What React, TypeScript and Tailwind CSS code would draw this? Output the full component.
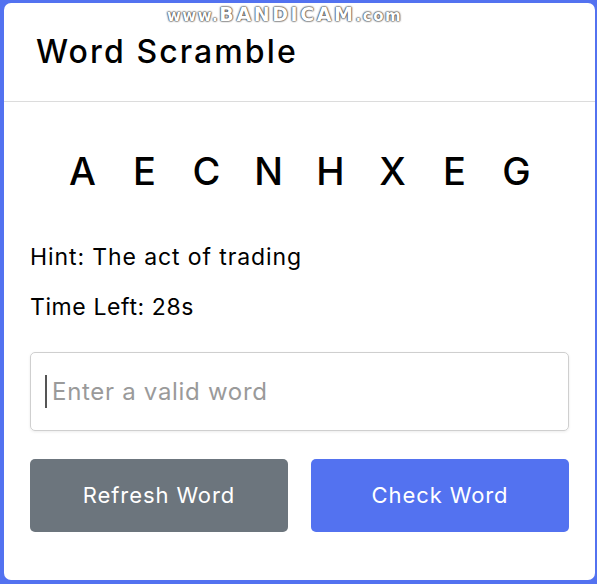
const letters = ["A", "E", "C", "N", "H", "X", "E", "G"];

const font = { fontFamily: "Inter, 'Noto Sans', sans-serif" };

export default function App() {
  return (
    <div className="relative min-h-screen bg-[#5372F0] pt-[3px] pl-[4px] pr-[2px] pb-[4px]" style={font}>
      <div className="rounded-[7px] bg-white h-[577px] flex flex-col">
        <header className="h-[99px] flex items-center pl-[32px] border-b border-[#dcdcdc]">
          <h1 className="text-[32px] font-medium text-black tracking-[2.1px]">Word Scramble</h1>
        </header>

        <div className="px-[26px] pt-[49px]">
          <div className="flex justify-center text-[38px] leading-[40px] font-medium text-black">
            {letters.map((l, i) => (
              <span key={i} className="w-[62px] text-center">{l}</span>
            ))}
          </div>

          <p className="mt-[51px] text-[23px] leading-[30px] tracking-[0.9px] text-black">Hint: The act of trading</p>
          <p className="mt-[20px] text-[23px] leading-[30px] tracking-[0.6px] text-black">Time Left: 28s</p>

          <div className="relative mt-[30px]">
            <input
              type="text"
              placeholder="Enter a valid word"
              className="w-full h-[79px] rounded-[5px] border border-[#cfcfcf] pl-[21px] text-[24px] tracking-[0.7px] text-black placeholder:text-[#9a9a9a] outline-none shadow-[0_1px_3px_rgba(0,0,0,0.08)]"
            />
            <span className="absolute left-[15px] top-[23px] w-[2px] h-[33px] bg-[#555]" />
          </div>

          <div className="mt-[28px] grid grid-cols-2 gap-[23px]">
            <button className="h-[73px] rounded-[5px] bg-[#6C757D] text-white text-[22px] tracking-[0.9px]">Refresh Word</button>
            <button className="h-[73px] rounded-[5px] bg-[#5372F0] text-white text-[22px] tracking-[0.9px]">Check Word</button>
          </div>
        </div>
      </div>

      <div
        className="absolute top-[3px] left-[167px] text-white font-extrabold text-[19px] leading-[22px] tracking-[2.6px] [text-shadow:0_0_2px_#444,0_0_2px_#444,0_0_1px_#222]"
        style={{ fontFamily: "'DejaVu Sans', sans-serif" }}
      >
        <span className="text-[15px] tracking-[1.5px]">www.</span>BANDICAM<span className="text-[15px] tracking-[1.5px]">.com</span>
      </div>
    </div>
  );
}
